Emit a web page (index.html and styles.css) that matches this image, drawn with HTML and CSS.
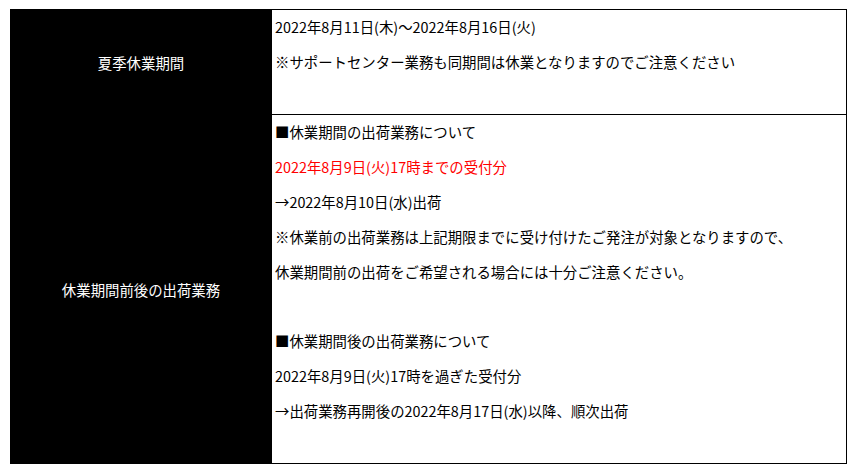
FILE: index.html
```html
<!DOCTYPE html>
<html lang="ja">
  <head>
    <meta charset="utf-8">
    <title>夏季休業のお知らせ</title>
    <link rel="stylesheet" href="styles.css">
  </head>
  <body>

  <table class="notice">
    <tr class="row-period">
      <th class="label">夏季休業期間</th>
      <td class="detail">
        <p>2022年8月11日(木)～2022年8月16日(火)</p>
        <p>※サポートセンター業務も同期間は休業となりますのでご注意ください</p>
        <p>&nbsp;</p>
      </td>
    </tr>
    <tr class="row-ship">
      <th class="label">休業期間前後の出荷業務</th>
      <td class="detail">
        <p>■休業期間の出荷業務について</p>
        <p class="red">2022年8月9日(火)17時までの受付分</p>
        <p>→2022年8月10日(水)出荷</p>
        <p>※休業前の出荷業務は上記期限までに受け付けたご発注が対象となりますので、</p>
        <p>休業期間前の出荷をご希望される場合には十分ご注意ください。</p>
        <p>&nbsp;</p>
        <p>■休業期間後の出荷業務について</p>
        <p>2022年8月9日(火)17時を過ぎた受付分</p>
        <p>→出荷業務再開後の2022年8月17日(水)以降、順次出荷</p>
        <p>&nbsp;</p>
      </td>
    </tr>
  </table>

  </body>
</html>
```

FILE: styles.css
```css
html {
  height: 100%;
}
body {
  margin: 0;
  padding: 9px 10px;
  background: #ffffff;
  color: #000000;
  font-family: "Noto Sans CJK JP", "Noto Sans", sans-serif;
  font-size: 14.4px;
}

.notice {
  width: 837px;
  border-collapse: collapse;
}

.label {
  width: 260px;
  padding: 0;
  background-color: #000000;
  color: #ffffff;
  font-weight: normal;
  text-align: center;
  vertical-align: middle;
  border: 1px solid #000000;
}

.detail {
  padding: 0 3px;
  border: 1px solid #000000;
  vertical-align: top;
}

.detail p {
  margin: 0;
  line-height: 34.8px;
  white-space: nowrap;
}

.red {
  color: #ff0000;
}
```
